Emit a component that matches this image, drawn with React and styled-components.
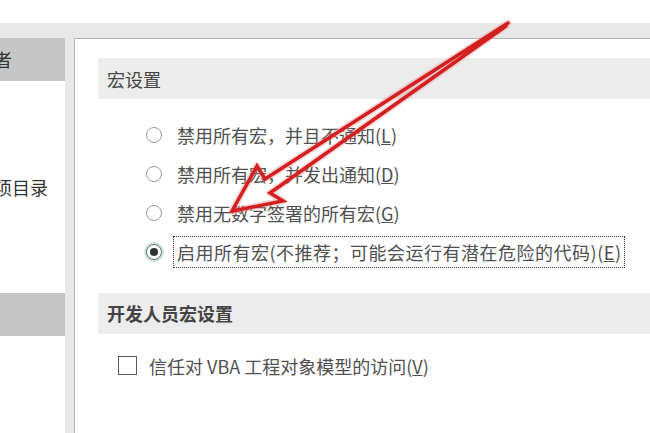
import React from "react";
import styled, { createGlobalStyle } from "styled-components";

const GlobalStyle = createGlobalStyle`
  html, body {
    margin: 0;
    padding: 0;
    background: #fff;
    overflow: hidden;
  }
  body {
    font-family: "Noto Sans CJK SC", "Microsoft YaHei", sans-serif;
  }
`;

const Page = styled.div`
  position: relative;
  width: 650px;
  height: 433px;
  display: flex;
  flex-direction: column;
  overflow: hidden;
`;

const TopStrip = styled.div`
  height: 23px;
  flex-shrink: 0;
  background: #fff;
`;

const Body = styled.div`
  flex: 1;
  display: flex;
  background: #e8e8e8;
  padding-top: 15px;
  min-height: 0;
`;

const Nav = styled.div`
  width: 65px;
  flex-shrink: 0;
  background: #fff;
  overflow: hidden;
`;

// the list is scrolled past its left edge, only the word ends show
const NavList = styled.div`
  margin-left: -130px;
  width: 195px;
  display: flex;
  flex-direction: column;
`;

const NavItem = styled.div`
  height: 42.5px;
  display: flex;
  align-items: center;
  padding-left: 16px;
  font-size: 18px;
  color: #333;
  white-space: nowrap;
  background: ${(p) => (p.$active ? "#c6c6c6" : "transparent")};
`;

const Content = styled.div`
  flex: 1;
  margin-left: 9px;
  background: #fff;
  border-top: 1px solid #b2b2b2;
  border-left: 1px solid #b2b2b2;
  padding: 19px 0 0 23px;
`;

const SectionHeader = styled.div`
  height: 41px;
  display: flex;
  align-items: center;
  padding-left: 9px;
  margin-top: ${(p) => p.$gap || 0}px;
  background: #ececec;
  font-size: 18px;
  color: #444;
  font-weight: ${(p) => (p.$bold ? 700 : 400)};
`;

const OptionList = styled.div`
  display: flex;
  flex-direction: column;
  padding: 16px 0 0 48px;
`;

const OptionRow = styled.div`
  height: 39px;
  display: flex;
  align-items: center;
  gap: 11px;
`;

const Radio = styled.span`
  position: relative;
  width: 14px;
  height: 14px;
  border-radius: 50%;
  flex-shrink: 0;
  background: #fff;
  border: 1px solid ${(p) => (p.$checked ? "#5e7a70" : "#9a9a9a")};
  box-shadow: ${(p) => (p.$checked ? "0 0 0 2px #cfe5dc" : "none")};

  &::after {
    content: "";
    display: ${(p) => (p.$checked ? "block" : "none")};
    position: absolute;
    left: 3px;
    top: 3px;
    width: 8px;
    height: 8px;
    border-radius: 50%;
    background: #2f3532;
  }
`;

const Label = styled.span`
  font-size: 18px;
  line-height: 26px;
  color: #505050;
  padding: 2px 3px;
  white-space: nowrap;
  letter-spacing: ${(p) => (p.$wide ? "0.5px" : "0")};
  border: 1px dotted ${(p) => (p.$focused ? "#333" : "transparent")};
`;

const CheckRow = styled.div`
  height: 32px;
  margin-top: 16px;
  padding-left: 20px;
  display: flex;
  align-items: center;
  gap: 8px;
`;

const Checkbox = styled.span`
  width: 17px;
  height: 17px;
  flex-shrink: 0;
  border: 1px solid #5a5a5a;
  background: #fff;
`;

const Overlay = styled.svg`
  position: absolute;
  left: 0;
  top: 0;
  pointer-events: none;
`;

const navItems = [
  { text: "受信任的发布者", active: true },
  { text: "受信任位置" },
  { text: "受信任的文档" },
  { text: "受信任的加载项目录" },
  { text: "加载项" },
  { text: "ActiveX 设置" },
  { text: "宏设置", active: true },
  { text: "受保护的视图" },
  { text: "消息栏" },
];

const macroOptions = [
  { text: "禁用所有宏，并且不通知", key: "L" },
  { text: "禁用所有宏，并发出通知", key: "D" },
  { text: "禁用无数字签署的所有宏", key: "G" },
  { text: "启用所有宏(不推荐；可能会运行有潜在危险的代码)", key: "E", checked: true },
];

const arrowPoints = "508,23 265,179 257,166 232,211 283,201 270,193 506,26";

const Arrow = () => (
  <Overlay width="650" height="433" viewBox="0 0 650 433">
    <polyline
      points={arrowPoints}
      fill="none"
      stroke="#f08c8c"
      strokeOpacity="0.35"
      strokeWidth="7"
      strokeLinecap="round"
      strokeLinejoin="round"
    />
    <polyline
      points={arrowPoints}
      fill="none"
      stroke="#d31f1f"
      strokeWidth="3.5"
      strokeLinecap="round"
      strokeLinejoin="miter"
    />
  </Overlay>
);

const App = () => {
  return (
    <>
      <GlobalStyle />
      <Page>
        <TopStrip />
        <Body>
          <Nav>
            <NavList>
              {navItems.map((item) => (
                <NavItem key={item.text} $active={item.active}>
                  {item.text}
                </NavItem>
              ))}
            </NavList>
          </Nav>
          <Content>
            <SectionHeader>宏设置</SectionHeader>
            <OptionList>
              {macroOptions.map((opt) => (
                <OptionRow key={opt.key}>
                  <Radio $checked={opt.checked} />
                  <Label $focused={opt.checked} $wide={opt.checked}>
                    {opt.text}(<u>{opt.key}</u>)
                  </Label>
                </OptionRow>
              ))}
            </OptionList>
            <SectionHeader $bold $gap={21.5}>
              开发人员宏设置
            </SectionHeader>
            <CheckRow>
              <Checkbox />
              <Label>
                信任对 VBA 工程对象模型的访问(<u>V</u>)
              </Label>
            </CheckRow>
          </Content>
        </Body>
        <Arrow />
      </Page>
    </>
  );
};

export default App;
